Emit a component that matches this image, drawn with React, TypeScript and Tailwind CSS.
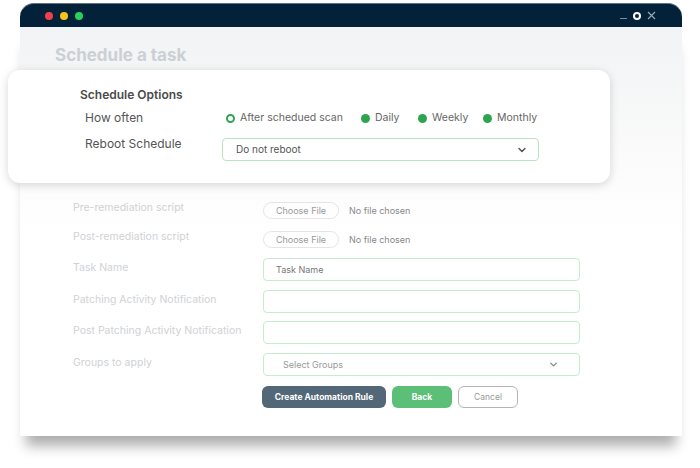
import { ChevronDown } from "lucide-react";

const font = { fontFamily: "Inter, 'Noto Sans', sans-serif" };

function Radio({ label, ring }: { label: string; ring?: boolean }) {
  return (
    <div className="flex items-center gap-[5px]">
      {ring ? (
        <span className="w-[9px] h-[9px] rounded-full border-2 border-[#2ea44f]" />
      ) : (
        <span className="w-[9px] h-[9px] rounded-full bg-[#2ea44f]" />
      )}
      <span className="text-[10.5px] text-[#666]">{label}</span>
    </div>
  );
}

function FileRow({ label, className = "" }: { label: string; className?: string }) {
  return (
    <div className={`flex items-center h-[23px] ${className}`}>
      <span className="w-[190px] text-[10.5px] text-[#cfd2d5] -mt-[5px]">{label}</span>
      <div className="flex items-center gap-[10px]">
        <span className="h-[17px] w-[76px] rounded-full border border-[#e4e4e4] flex items-center justify-center text-[9px] text-[#999]">
          Choose File
        </span>
        <span className="text-[9px] text-[#888]">No file chosen</span>
      </div>
    </div>
  );
}

function InputRow({ label, placeholder, className = "" }: { label: string; placeholder?: string; className?: string }) {
  return (
    <div className={`flex items-center h-[23px] ${className}`}>
      <span className="w-[190px] text-[10.5px] text-[#cfd2d5] -mt-[3px]">{label}</span>
      <div className="w-[317px] h-[23px] rounded-[4px] border border-[#c6ebcf] bg-white flex items-center px-[12px] text-[9px] text-[#777]">
        {placeholder}
      </div>
    </div>
  );
}

export default function App() {
  return (
    <div className="w-[700px] h-[468px] bg-white overflow-hidden pt-[3px]" style={font}>
      <div className="ml-[20px] w-[662px]">
        {/* Title bar */}
        <div className="h-[24px] rounded-t-[14px] bg-[#03223a] border-t border-[#5d7384] flex items-center justify-between pl-[25px] pr-[26px]">
          <div className="flex items-center gap-[7px]">
            <span className="w-[8px] h-[8px] rounded-full bg-[#f0414b]" />
            <span className="w-[8px] h-[8px] rounded-full bg-[#f8c21c]" />
            <span className="w-[8px] h-[8px] rounded-full bg-[#27d05c]" />
          </div>
          <div className="flex items-center gap-[6px]">
            <span className="w-[7px] h-[1px] bg-[#7d8b96] mt-[6px]" />
            <span className="w-[8px] h-[8px] rounded-full border-2 border-white" />
            <svg width="9" height="9" viewBox="0 0 9 9" className="text-[#9aa6b0]">
              <path d="M1 1L8 8M8 1L1 8" stroke="currentColor" strokeWidth="1.2" />
            </svg>
          </div>
        </div>

        {/* Body */}
        <div className="h-[409px] bg-gradient-to-b from-[#f2f3f4] via-white to-white shadow-[0_16px_12px_-6px_rgba(0,0,0,0.32)]">
          <div className="pt-[17px] pl-[35px] h-[43px]">
            <h1 className="text-[17px] font-bold text-[#cbd0d5] leading-[22px]">Schedule a task</h1>
          </div>

          {/* Floating options card */}
          <div className="-ml-[12px] w-[602px] h-[113px] bg-white rounded-[12px] shadow-[0_2px_10px_rgba(0,0,0,0.16)] pt-[17px] pl-[72px]">
            <div className="text-[12px] font-semibold text-[#4a4a4a] leading-[16px]">Schedule Options</div>
            <div className="flex items-center h-[16px] mt-[7px] pl-[5px]">
              <span className="w-[141px] text-[12px] text-[#555]">How often</span>
              <div className="flex items-center">
                <div className="w-[135px]"><Radio label="After schedued scan" ring /></div>
                <div className="w-[57px]"><Radio label="Daily" /></div>
                <div className="w-[65px]"><Radio label="Weekly" /></div>
                <Radio label="Monthly" />
              </div>
            </div>
            <div className="flex items-start mt-[12px] pl-[5px]">
              <span className="w-[137px] text-[12px] text-[#555] -mt-[3px] leading-[16px] pt-[1px]">Reboot Schedule</span>
              <div className="w-[317px] h-[23px] rounded-[4px] border border-[#b9e4c3] flex items-center justify-between pl-[13px] pr-[10px]">
                <span className="text-[10px] text-[#555]">Do not reboot</span>
                <ChevronDown className="w-[12px] h-[12px] text-[#555]" strokeWidth={3} />
              </div>
            </div>
          </div>

          {/* Faded form */}
          <div className="pl-[53px] pt-[16px] flex flex-col">
            <FileRow label="Pre-remediation script" />
            <FileRow label="Post-remediation script" className="mt-[6px]" />
            <InputRow label="Task Name" placeholder="Task Name" className="mt-[7px]" />
            <InputRow label="Patching Activity Notification" className="mt-[9px]" />
            <InputRow label="Post Patching Activity Notification" className="mt-[8px]" />
            <div className="flex items-center h-[23px] mt-[9px]">
              <span className="w-[190px] text-[10.5px] text-[#cfd2d5] -mt-[3px]">Groups to apply</span>
              <div className="w-[317px] h-[23px] rounded-[4px] border border-[#c6ebcf] bg-white flex items-center justify-between pl-[19px] pr-[20px]">
                <span className="text-[9px] text-[#999]">Select Groups</span>
                <ChevronDown className="w-[11px] h-[11px] text-[#888]" strokeWidth={3} />
              </div>
            </div>
            <div className="flex items-center gap-[6px] pl-[189px] mt-[10px]">
              <button className="h-[22px] w-[124px] rounded-[6px] bg-[#526777] text-white text-[8.5px] font-bold">
                Create Automation Rule
              </button>
              <button className="h-[22px] w-[60px] rounded-[6px] bg-[#5cbf77] text-white text-[8.5px] font-bold">
                Back
              </button>
              <button className="h-[22px] w-[60px] rounded-[6px] border border-[#b5b5b5] bg-white text-[#999] text-[8.5px]">
                Cancel
              </button>
            </div>
          </div>
        </div>
      </div>
    </div>
  );
}
